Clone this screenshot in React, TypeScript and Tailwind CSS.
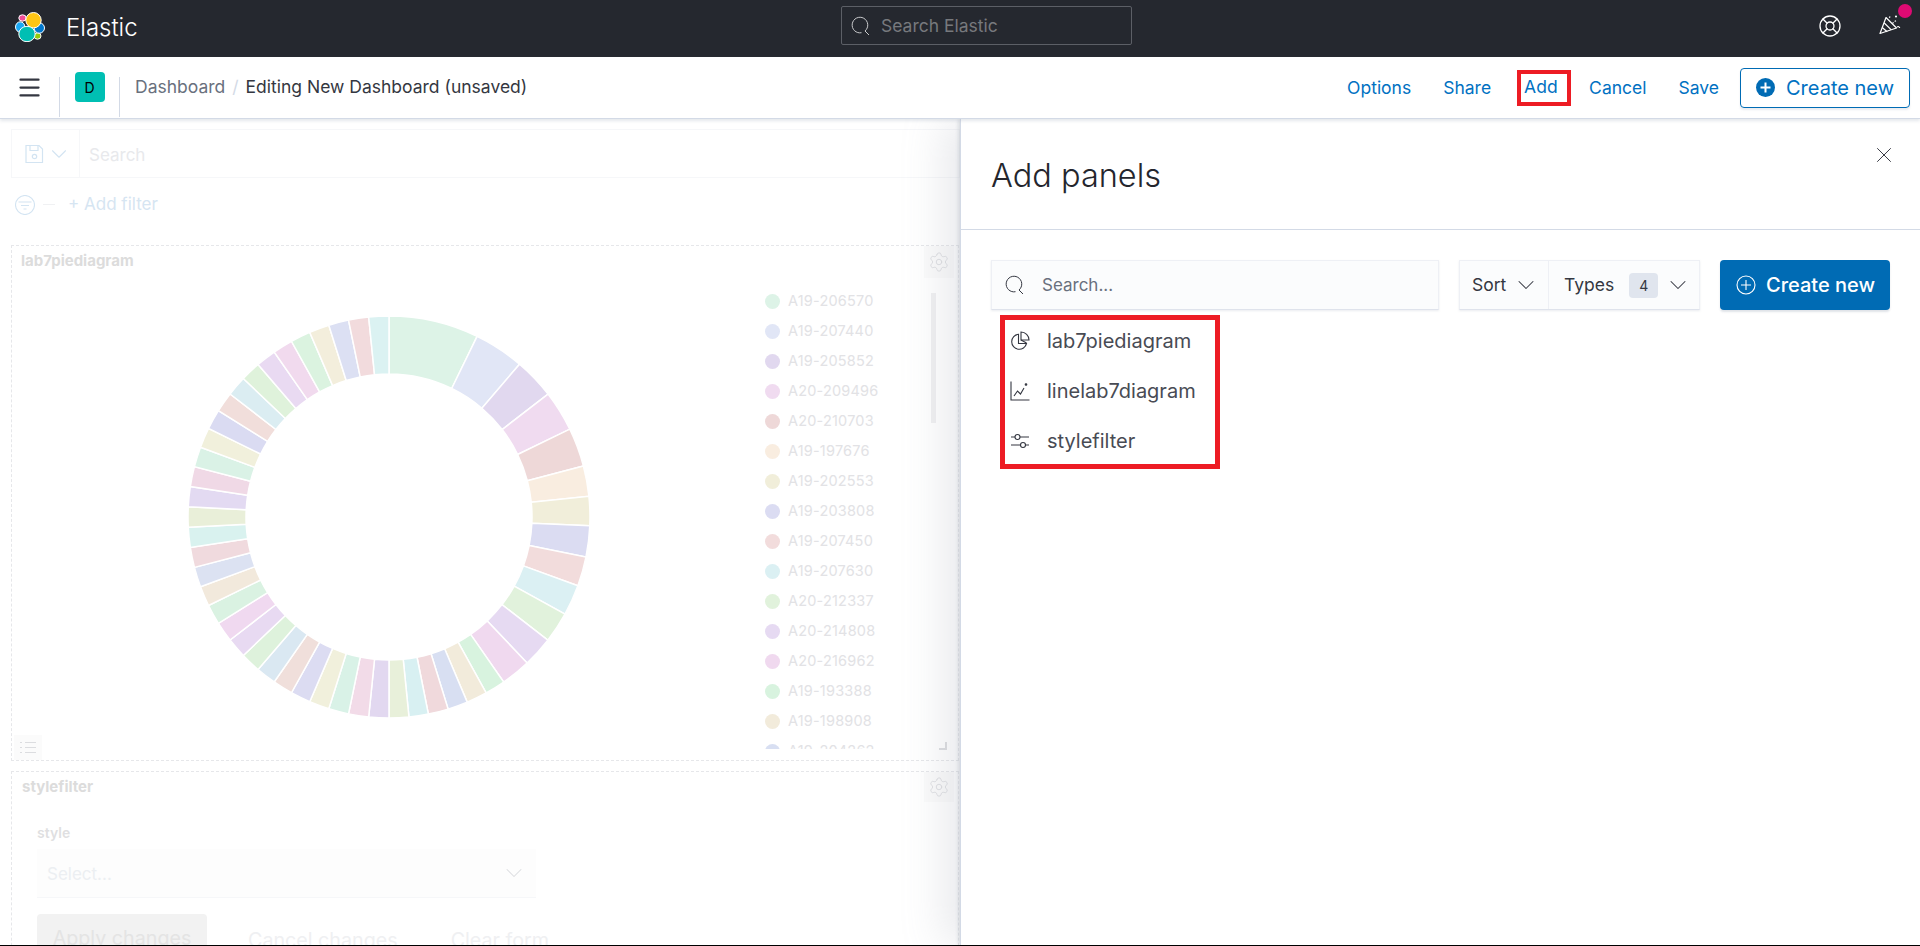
import React from "react";
import { ChevronDown, Settings, LifeBuoy, X, Menu } from "lucide-react";

const sliceEnds = [26, 40.5, 52.3, 64.1, 75.3, 84.1, 92.5, 101.5, 110, 118.9, 127.8, 136.6, 145.2, 151.1, 157.1, 162.9, 168.7, 174.3, 180];
const sliceColors = ["#ddf3e7","#e1e6f6","#e1d8ef","#f0dbf0","#eed8d8","#f9ede0","#f1eeda","#dbdcf2","#f2dcdc","#dbf0f3","#e1f2dc","#e6daf2","#f0d9ef","#d8f3df","#f2ebdb","#d8dff2","#f0d9dc","#d8f0f2","#e8f0da","#e2d8f0","#f2dbe8","#d9f2e7","#f1f0dc","#dcdcf2","#f0dfdb","#dae8f2","#def2dc","#e8daf2","#f0d9f0","#daf2e2","#f2e9dc","#dce2f2","#f0dade","#d9f2ef","#e9efd9","#e3daf2","#f0d9e6","#daf2e6","#f1f0dc","#dadbf2","#f1dedb","#dbedf2","#dff2db","#e9daf2","#f1daee","#dbf3e0","#f3eedc","#dce0f3","#f2dbdd","#dbf2f2"];
const legend: [string, string][] = [["A19-206570","#ddf3e7"],["A19-207440","#e1e6f6"],["A19-205852","#e1d8ef"],["A20-209496","#f0dbf0"],["A20-210703","#eed8d8"],["A19-197676","#f9ede0"],["A19-202553","#f1eeda"],["A19-203808","#dbdcf2"],["A19-207450","#f2dcdc"],["A19-207630","#dbf0f3"],["A20-212337","#e1f2dc"],["A20-214808","#e6daf2"],["A20-216962","#f0d9ef"],["A19-193388","#d8f3df"],["A19-198908","#f2ebdb"],["A19-204262","#d8dff2"]];

function Donut() {
  const ends = [...sliceEnds];
  for (let i = 1; i <= 31; i++) ends.push(180 + (180 * i) / 31);
  const R = 201, r = 143, c = 202;
  const pt = (rad: number, a: number) => {
    const t = (a * Math.PI) / 180;
    return `${(c + rad * Math.sin(t)).toFixed(2)} ${(c - rad * Math.cos(t)).toFixed(2)}`;
  };
  let prev = 0;
  return (
    <svg width="404" height="404" viewBox="0 0 404 404" className="block shrink-0">
      {ends.map((e, i) => {
        const d = `M${pt(r, prev)} L${pt(R, prev)} A${R} ${R} 0 0 1 ${pt(R, e)} L${pt(r, e)} A${r} ${r} 0 0 0 ${pt(r, prev)}Z`;
        prev = e;
        return <path key={i} d={d} fill={sliceColors[i]} stroke="#ffffff" strokeWidth="1.5" />;
      })}
    </svg>
  );
}

function ElasticLogo() {
  return (
    <svg width="30" height="30" viewBox="0 0 30 30" className="block shrink-0">
      <g stroke="#ffffff" strokeWidth="1">
        <ellipse cx="7.500" cy="6" rx="3.700" ry="3.200" fill="#f04e98" />
        <ellipse cx="5.200" cy="15" rx="4.700" ry="5.200" fill="#1ba9f5" />
        <ellipse cx="22.500" cy="24" rx="3.500" ry="3.200" fill="#93c90e" />
        <ellipse cx="24.300" cy="16" rx="5.200" ry="5.200" fill="#0077cc" />
        <ellipse cx="18.500" cy="8.200" rx="7.700" ry="7.700" fill="#fec514" />
        <ellipse cx="12" cy="22" rx="8.200" ry="7.700" fill="#00bfb3" />
      </g>
    </svg>
  );
}

function PartyIcon() {
  return (
    <svg width="24" height="24" viewBox="0 0 24 24" fill="none" stroke="#ffffff" strokeWidth="1.200" strokeLinejoin="round" className="block shrink-0">
      <path d="M2 19.500L8 3.500l10.500 10.500z" />
      <path d="M4.200 13.500l5 4.300M6 8.700l7.300 7.200" />
      <path d="M11 3.500c1.200-.4 1.800-1.200 1.700-2.300M14.500 9.500c1.400-1.700 2.800-2.700 4.500-3" strokeDasharray="1.500 1.500" />
      <path d="M19 13c1.300-.7 2.500-.2 2.700 1" />
      <circle cx="18" cy="2.500" r="0.500" fill="#ffffff" />
    </svg>
  );
}

function SearchIcon({ color, size }: { color: string; size: number }) {
  return (
    <svg width={size} height={size} viewBox="0 0 20 20" fill="none" stroke={color} strokeWidth="1" className="block shrink-0">
      <path d="M11.500 16.700A7.800 7.800 0 1 1 15 15" />
      <path d="M15 15l4 4" />
    </svg>
  );
}

function PlusCircle({ filled }: { filled: boolean }) {
  return filled ? (
    <svg width="19" height="19" viewBox="0 0 19 19" className="block shrink-0">
      <circle cx="9.500" cy="9.500" r="9.500" fill="#006bb4" />
      <path d="M9.500 4.500v10M4.500 9.500h10" stroke="#ffffff" strokeWidth="2" />
    </svg>
  ) : (
    <svg width="20" height="20" viewBox="0 0 20 20" fill="none" stroke="#ffffff" strokeWidth="1.100" className="block shrink-0">
      <circle cx="10" cy="10" r="9" />
      <path d="M10 5v10M5 10h10" />
    </svg>
  );
}

function PieIcon() {
  return (
    <svg width="20" height="20" viewBox="0 0 20 20" fill="none" stroke="#343741" strokeWidth="1.100" className="block shrink-0">
      <path d="M8.500 3.300a7.500 7.500 0 1 0 8 9.200H8.500z" />
      <path d="M11 1a8 8 0 0 1 8 8h-8z" />
      <path d="M11 9l5.500 3" />
    </svg>
  );
}

function LineIcon() {
  return (
    <svg width="20" height="20" viewBox="0 0 20 20" fill="none" stroke="#343741" strokeWidth="1.100" className="block shrink-0">
      <path d="M1 0.500v18.500h18.500" />
      <path d="M4 15l3.500-5 3 3 3.500-6" />
      <circle cx="16" cy="3.500" r="0.800" fill="#343741" />
    </svg>
  );
}

function SlidersIcon() {
  return (
    <svg width="20" height="20" viewBox="0 0 20 20" fill="none" stroke="#343741" strokeWidth="1.100" className="block shrink-0">
      <path d="M1 6h4M10 6h9M1 14h10M15 14h4" />
      <circle cx="7.500" cy="6" r="2.500" />
      <circle cx="13" cy="14" r="2.500" />
    </svg>
  );
}

function SaveIcon() {
  return (
    <svg width="20" height="20" viewBox="0 0 20 20" fill="none" stroke="#d3e4f2" strokeWidth="1.200" className="block shrink-0">
      <path d="M2 1.500h13l3.500 3.500v13.500h-16.500z" />
      <path d="M6 1.500v5h8v-5" />
      <circle cx="10.500" cy="12.500" r="2.200" />
    </svg>
  );
}

function FilterIcon() {
  return (
    <svg width="20" height="20" viewBox="0 0 20 20" fill="none" stroke="#d3e4f2" strokeWidth="1.100" className="block shrink-0">
      <circle cx="10" cy="10" r="9.500" />
      <path d="M3.500 7h13M6 10.500h8M8.500 14h3" />
    </svg>
  );
}

function ListIcon() {
  return (
    <svg width="16" height="13" viewBox="0 0 16 13" fill="none" stroke="#dcdde0" strokeWidth="1" className="block">
      <path d="M5 1.500h11M5 6.500h11M5 11.500h11M0 1.500h2M0 6.500h2M0 11.500h2" />
    </svg>
  );
}

function LinkItem({ label, className }: { label: string; className?: string }) {
  return <span className={`text-[#0071c2] leading-none ${className ?? ""}`}>{label}</span>;
}

export default function App() {
  return (
    <div className="h-[946px] w-[1920px] overflow-hidden flex flex-col bg-white font-['Inter','Liberation_Sans',sans-serif]">
      <header className="h-[57px] shrink-0 bg-[#25282f] flex items-center relative">
        <div className="ml-[15px] -mt-[3px]"><ElasticLogo /></div>
        <span className="ml-[21px] w-[71px] -mt-[2px] text-white text-[24px] leading-none font-light">Elastic</span>
        <div className="ml-[704px] w-[291px] h-[39px] -mt-[6px] border border-[#5c5f66] rounded-[2px] flex items-center pl-[8px] gap-[11px]">
          <SearchIcon color="#c9cacc" size={20} />
          <span className="pt-[2px] text-[17.500px] text-[#77797d]">Search Elastic</span>
        </div>
        <div className="ml-auto flex items-center mr-[18px] mb-[5px] gap-[36px]">
          <LifeBuoy size={24} color="#ffffff" strokeWidth={1.3} />
          <div className="relative">
            <PartyIcon />
            <span className="absolute -top-[10px] left-[20px] w-[14px] h-[14px] rounded-full bg-[#dd0a73]" />
          </div>
        </div>
      </header>

      <nav className="h-[62px] shrink-0 flex items-start border-b border-[#d3dae6] shadow-[0_2px_3px_rgba(152,162,179,0.25)] relative z-20 bg-white text-[17.500px]">
        <div className="w-[59px] h-[61px] pt-[17px] flex justify-center">
          <Menu size={27} color="#343741" strokeWidth={2} />
        </div>
        <div className="w-px h-[40px] mt-[20px] bg-[#d3dae6]" />
        <div className="w-[59px] flex justify-center pt-[15px]">
          <div className="w-[30px] h-[30px] rounded-[4px] bg-[#00bfb3] flex items-center justify-center text-[14px] text-black">D</div>
        </div>
        <div className="w-px h-[40px] mt-[20px] bg-[#d3dae6]" />
        <div className="ml-[15px] h-[61px] flex items-center">
          <span className="text-[#69707d]">Dashboard</span>
          <span className="mx-[7px] text-[#d3dae6]">/</span>
          <span className="text-[#343741]">Editing New Dashboard (unsaved)</span>
        </div>
        <div className="ml-auto h-[61px] flex items-center mr-[10px]">
          <LinkItem label="Options" className="mr-[32px]" />
          <LinkItem label="Share" className="mr-[26px]" />
          <span className="border-[4px] border-[#ed1c24] w-[54px] h-[36px] flex items-center pl-[3px] mr-[18px] text-[#0071c2]">Add</span>
          <LinkItem label="Cancel" className="mr-[32px]" />
          <LinkItem label="Save" className="mr-[21px]" />
          <div className="w-[170px] h-[40px] border border-[#006bb4] rounded-[4px] flex items-center pl-[15px] gap-[11px] shadow-[0_2px_2px_rgba(152,162,179,0.2)]">
            <PlusCircle filled />
            <span className="text-[#0071c2] text-[20px]">Create new</span>
          </div>
        </div>
      </nav>

      <div className="flex-1 min-h-0 flex relative">
        <main className="w-[960px] shrink-0 overflow-hidden pl-[11px] pt-[10px]">
          <div className="w-[949px] h-[49px] border border-[#f6f7f9] flex items-center">
            <div className="w-[68px] h-full border-r border-[#f6f7f9] flex items-center pl-[12px] gap-[2px]">
              <SaveIcon />
              <ChevronDown size={26} color="#d3e4f2" strokeWidth={1} />
            </div>
            <span className="ml-[9px] pt-[5px] text-[17px] text-[#e8e9ec]">Search</span>
          </div>
          <div className="h-[51px] flex items-center ml-[4px] pt-[2px]">
            <FilterIcon />
            <div className="w-[12px] h-px bg-[#f0f1f3] ml-[8px]" />
            <span className="ml-[13px] text-[17px] text-[#d6e5f2]">+ Add filter</span>
          </div>

          <section className="relative mt-[16px] w-[948px] h-[516px] border border-dashed border-[#e6e7ea] flex flex-col">
            <div className="h-[30px] pl-[9px] flex items-center text-[15px] font-bold text-[#dcdcdc]">lab7piediagram</div>
            <div className="flex">
              <div className="ml-[175px] mt-[39px]"><Donut /></div>
              <div className="ml-[174px] w-[166px] h-[473px] overflow-hidden pt-[10px]">
                {legend.map(([n, c]) => (
                  <div key={n} className="h-[30px] flex items-center gap-[8px]">
                    <span className="w-[15px] h-[15px] rounded-full shrink-0" style={{ backgroundColor: c }} />
                    <span className="text-[14.500px] tracking-[0.2px] text-[#e2e2e5]">{n}</span>
                  </div>
                ))}
              </div>
              <div className="w-[5px] h-[130px] bg-[#f0f0f2] mt-[17px]" />
            </div>
            <div className="absolute top-0 right-[4px] w-[30px] h-[32px] bg-[#fbfbfb] flex items-center justify-center">
              <Settings size={22} color="#dcdde0" strokeWidth={1} />
            </div>
            <div className="absolute bottom-0 left-[2px] w-[28px] h-[25px] bg-[#fbfbfb] flex items-center justify-center">
              <ListIcon />
            </div>
            <div className="absolute bottom-[10px] right-[11px] w-[8px] h-[8px] border-r-2 border-b-2 border-[#dcdde0]" />
          </section>

          <section className="relative mt-[10px] w-[948px] h-[200px] border border-dashed border-[#e6e7ea] border-b-0">
            <div className="h-[30px] pl-[10px] flex items-center text-[15px] font-bold text-[#dcdcdc]">stylefilter</div>
            <div className="pl-[25px] pt-[20px]">
              <div className="text-[14px] leading-[22px] font-semibold text-[#dfdfe1]">style</div>
              <div className="mt-[5px] w-[499px] h-[49px] bg-[#fdfdfd] border-b border-[#f6f7f9] flex items-center justify-between pl-[10px] pr-[8px]">
                <span className="pt-[3px] text-[17px] text-[#eceff2]">Select...</span>
                <ChevronDown size={28} color="#dddee1" strokeWidth={0.9} />
              </div>
              <div className="mt-[16px] flex items-start text-[19.700px]">
                <div className="w-[170px] h-[50px] rounded-[4px] bg-[#f2f2f2] flex items-center justify-center text-[#e4e4e4]">Apply changes</div>
                <span className="ml-[41px] mt-[12px] text-[#eff0f2]">Cancel changes</span>
                <span className="ml-[53px] mt-[12px] text-[#eff0f2]">Clear form</span>
              </div>
            </div>
            <div className="absolute top-0 right-[4px] w-[30px] h-[30px] bg-[#fbfbfb] flex items-center justify-center">
              <Settings size={22} color="#dcdde0" strokeWidth={1} />
            </div>
          </section>
        </main>

        <aside className="flex-1 min-w-0 border-l border-[#d3dae6] bg-white relative z-10 shadow-[-2px_0_3px_rgba(190,195,205,0.45),-16px_0_40px_rgba(150,155,170,0.22)] text-[#343741]">
          <div className="h-[111px] border-b border-[#d3dae6] flex items-start justify-between pl-[30px] pr-[23px]">
            <h2 className="mt-[35px] text-[32.500px] leading-[44px] font-light text-[#24262d]">Add panels</h2>
            <X size={26} color="#343741" strokeWidth={0.9} className="mt-[23px]" />
          </div>
          <div className="flex items-start pl-[30px] pt-[30px]">
            <div className="w-[448px] h-[50px] bg-[#fbfcfd] border border-[#eef0f5] border-b-[#dfe3ec] shadow-[0_1px_2px_rgba(152,162,179,0.2)] flex items-center pl-[12px] gap-[18px]">
              <SearchIcon color="#343741" size={20} />
              <span className="pt-[1px] text-[17px] text-[#69707d]">Search...</span>
            </div>
            <div className="ml-[20px] w-[241px] h-[50px] bg-[#fbfcfd] border border-[#eef0f5] border-b-[#dfe3ec] shadow-[0_1px_2px_rgba(152,162,179,0.2)] flex items-center text-[17.500px]">
              <div className="w-[89px] h-full border-r border-[#eef0f5] flex items-center pl-[12px] gap-[6px]">
                <span className="pt-[1px]">Sort</span>
                <ChevronDown size={28} color="#343741" strokeWidth={0.9} />
              </div>
              <div className="flex-1 flex items-center pl-[15px]">
                <span className="pt-[1px]">Types</span>
                <span className="ml-[15px] w-[29px] h-[25px] rounded-[4px] bg-[#e0e5ee] flex items-center justify-center text-[14px]">4</span>
                <ChevronDown size={28} color="#343741" strokeWidth={0.9} className="ml-[6px]" />
              </div>
            </div>
            <div className="ml-[20px] w-[170px] h-[50px] bg-[#006bb4] rounded-[4px] flex items-center pl-[16px] gap-[10px] text-white text-[20px] font-medium shadow-[0_2px_2px_rgba(152,162,179,0.3)]">
              <PlusCircle filled={false} />
              <span>Create new</span>
            </div>
          </div>
          <div className="ml-[39px] mt-[5px] w-[220px] h-[154px] border-[5px] border-[#ed1c24] flex flex-col text-[20px] text-[#484b54]">
            {[
              { n: "lab7piediagram", i: <PieIcon /> },
              { n: "linelab7diagram", i: <LineIcon /> },
              { n: "stylefilter", i: <SlidersIcon /> },
            ].map((it) => (
              <div key={it.n} className="h-[50px] shrink-0 flex items-center pl-[5px] gap-[17px] first:-mt-[4px]">
                {it.i}
                <span>{it.n}</span>
              </div>
            ))}
          </div>
        </aside>
      </div>
      <div className="h-px shrink-0 bg-black relative z-30" />
    </div>
  );
}
